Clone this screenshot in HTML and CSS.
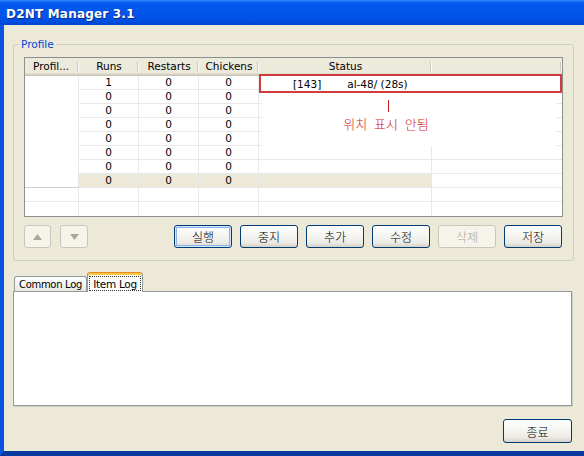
FILE: index.html
```html
<!DOCTYPE html>
<html>
<head>
<meta charset="utf-8">
<title>D2NT Manager 3.1</title>
<link rel="stylesheet" href="styles.css">
</head>
<body>
<div class="window">
  <div class="titlebar"><span class="title">D2NT Manager 3.1</span></div>
  <div class="client">
    <fieldset class="group">
      <legend class="group-label">Profile</legend>
      <div class="lv">
        <div class="hc hc-left">Profil...</div>
        <div class="hc">Runs</div>
        <div class="hc">Restarts</div>
        <div class="hc">Chickens</div>
        <div class="hc">Status</div>
        <div class="hc"></div>

        <div class="c c1"></div><div class="c">1</div><div class="c">0</div><div class="c">0</div><div class="c"></div><div class="c last"></div>
        <div class="c c1"></div><div class="c">0</div><div class="c">0</div><div class="c">0</div><div class="c"></div><div class="c last"></div>
        <div class="c c1"></div><div class="c">0</div><div class="c">0</div><div class="c">0</div><div class="c"></div><div class="c last"></div>
        <div class="c c1"></div><div class="c">0</div><div class="c">0</div><div class="c">0</div><div class="c"></div><div class="c last"></div>
        <div class="c c1"></div><div class="c">0</div><div class="c">0</div><div class="c">0</div><div class="c"></div><div class="c last"></div>
        <div class="c c1"></div><div class="c">0</div><div class="c">0</div><div class="c">0</div><div class="c"></div><div class="c last"></div>
        <div class="c c1"></div><div class="c">0</div><div class="c">0</div><div class="c">0</div><div class="c"></div><div class="c last"></div>
        <div class="c c1 c1-end"></div><div class="c hl">0</div><div class="c hl">0</div><div class="c hl">0</div><div class="c hl"></div><div class="c last"></div>
        <div class="c"></div><div class="c"></div><div class="c"></div><div class="c"></div><div class="c"></div><div class="c last"></div>
        <div class="c c-bottom"></div><div class="c c-bottom"></div><div class="c c-bottom"></div><div class="c c-bottom"></div><div class="c c-bottom"></div><div class="c c-bottom last"></div>

        <div class="redbox"><span class="rb-id">[143]</span><span class="rb-txt">al-48/ (28s)</span></div>
        <div class="note">
          <div class="note-inner">
            <div class="note-line"></div>
            <div class="note-text">위치 표시 안됨</div>
          </div>
        </div>
      </div>
      <div class="btnrow">
        <div class="arrows">
          <button class="btn arrow disabled" type="button"><svg width="9" height="6" viewBox="0 0 9 6"><polygon points="4.5,0 9,6 0,6" fill="#ACA899"/></svg></button>
          <button class="btn arrow arrow-down disabled" type="button"><svg width="9" height="6" viewBox="0 0 9 6"><polygon points="0,0 9,0 4.5,6" fill="#ACA899"/></svg></button>
        </div>
        <div class="actions">
          <button class="btn kr default" type="button">실행</button>
          <button class="btn kr" type="button">중지</button>
          <button class="btn kr" type="button">추가</button>
          <button class="btn kr" type="button">수정</button>
          <button class="btn kr disabled" type="button">삭제</button>
          <button class="btn kr" type="button">저장</button>
        </div>
      </div>
    </fieldset>

    <div class="tabs">
      <div class="tabstrip">
        <div class="tab tab-off">Common Log</div>
        <div class="tab tab-on"><span class="focus">Item Log</span></div>
      </div>
      <div class="panel"></div>
    </div>

    <div class="footer">
      <button class="btn kr close" type="button">종료</button>
    </div>
  </div>
</div>
</body>
</html>
```

FILE: styles.css
```css
* { box-sizing: border-box; }
html, body { margin: 0; padding: 0; }
body {
  width: 584px;
  height: 456px;
  overflow: hidden;
  background: #ECE9D8;
  font-family: "DejaVu Sans", "Noto Sans CJK KR", sans-serif;
  font-size: 10px;
  color: #000;
}
.window {
  display: flex;
  flex-direction: column;
  height: 456px;
}
.titlebar {
  flex: none;
  height: 25px;
  padding: 3px 0 0 6px;
  display: flex;
  align-items: center;
  background: linear-gradient(#3A8CFF 0, #0A62F0 2px, #0058EE 5px, #0256EA 50%, #004FE0 85%, #0044CC 100%);
}
.title {
  color: #fff;
  font: bold 12px "DejaVu Sans", sans-serif;
  letter-spacing: 0.2px;
  text-shadow: 1px 1px 0 #0A2A8A;
}
.client {
  flex: 1;
  display: flex;
  flex-direction: column;
  background: #ECE9D8;
  border-left: 4px solid #0A55E0;
  border-bottom: 5px solid #0B3A9E;
}

/* group box */
.group {
  margin: 13px 10px 0 9px;
  padding: 6px 10px 12px 10px;
  border: 1px solid #D0D0BF;
  border-radius: 3px;
  min-width: 0;
}
.group-label {
  margin-left: -5px;
  padding: 0 2px;
  line-height: 13px;
  color: #0046D5;
  font-size: 10.5px;
}

/* list view */
.lv {
  position: relative;
  width: 539px;
  height: 160px;
  border: 1px solid #8E8F8F;
  background: #fff;
  display: grid;
  grid-template-columns: 54px 60px 60px 60px 173px 130px;
  grid-template-rows: 18px;
  grid-auto-rows: 14px;
}
.hc {
  position: relative;
  display: flex;
  align-items: center;
  justify-content: center;
  padding-bottom: 2px;
  background: #EBEADB;
  box-shadow: inset 0 -1px #CBC7B8, inset 0 -2px #D6D2C2, inset 0 -3px #E2DECD;
  white-space: nowrap;
  font-size: 10.5px;
}
.hc::after {
  content: "";
  position: absolute;
  right: 1px;
  top: 4px;
  bottom: 5px;
  width: 1px;
  background: #C7C5B2;
  box-shadow: 1px 0 #FFFFFF;
}
.hc:last-of-type::after { display: none; }
.hc-left { justify-content: flex-start; padding-left: 8px; }
.c {
  display: flex;
  align-items: center;
  justify-content: center;
  border-right: 1px solid #E8E8E8;
  border-bottom: 1px solid #E8E8E8;
  line-height: 13px;
  font-size: 10.5px;
}
.c1 { border-bottom-color: transparent; }
.c1-end { border-bottom-color: #D0D0D0; }
.c-bottom { border-bottom: none; }
.last { border-right: none; }
.hl { background: #ECE9D8; }

/* annotation overlays */
.redbox {
  position: absolute;
  left: 234px;
  top: 16px;
  width: 303px;
  height: 19px;
  border: 2px solid #D23C3F;
  background: #fff;
  display: flex;
  align-items: center;
  font-size: 10.5px;
}
.rb-id { margin-left: 32px; }
.rb-txt { margin-left: 26px; }
.note {
  position: absolute;
  left: 237px;
  top: 35px;
  width: 294px;
  height: 53px;
  background: #fff;
}
.note-inner {
  width: 84px;
  margin-left: 82px;
  display: flex;
  flex-direction: column;
  align-items: center;
}
.note-line {
  width: 1px;
  height: 12px;
  margin-top: 7px;
  margin-left: 4px;
  background: #C81818;
}
.note-text {
  margin-top: 4px;
  color: #D21B1B;
  font: 300 13px "Noto Sans CJK KR", sans-serif;
  line-height: 15px;
  word-spacing: 4px;
  white-space: nowrap;
}

/* buttons */
.btnrow {
  display: flex;
  justify-content: space-between;
  margin-top: 8px;
}
.arrows { display: flex; gap: 9px; }
.actions { display: flex; gap: 8px; margin-right: 1px; }
.btn {
  width: 58px;
  height: 23px;
  padding: 0;
  border: 1px solid #003C74;
  border-radius: 3px;
  background: linear-gradient(#FFFFFF 0, #F6F6F2 40%, #ECEBE6 80%, #D6D0C5 100%);
  color: #000;
  font-family: "DejaVu Sans", sans-serif;
  font-size: 10px;
  display: flex;
  align-items: center;
  justify-content: center;
}
.kr { font: 300 12px "Noto Sans CJK KR", sans-serif; }
.default {
  box-shadow: inset 0 0 0 1px #CEE7FF, inset 0 0 0 2px #8FB2EE;
}
.disabled {
  border-color: #C9C7BA;
  background: #F5F4EA;
  color: #ACA899;
}
.arrow { width: 27px; }
.arrow-down { width: 28px; }

/* tabs */
.tabs {
  margin: 11px 12px 0 9px;
  display: flex;
  flex-direction: column;
}
.tabstrip {
  position: relative;
  z-index: 1;
  height: 20px;
  margin-bottom: -1px;
  padding-left: 1px;
  display: flex;
  align-items: flex-end;
}
.tab {
  border: 1px solid #919B9C;
  border-bottom: none;
  border-radius: 3px 3px 0 0;
  display: flex;
  align-items: center;
  justify-content: center;
  white-space: nowrap;
  letter-spacing: -0.3px;
  font-size: 10px;
}
.tab-off {
  width: 73px;
  height: 15px;
  margin-bottom: 1px;
  padding-top: 1px;
  background: linear-gradient(#FFFFFF, #F3F3EF 60%, #E8E7E1);
}
.tab-on {
  width: 56px;
  height: 20px;
  background: #fff;
  border-top: 1px solid #E68B2C;
  box-shadow: inset 0 2px #FFC73C;
  padding: 3px 1px 1px;
  align-items: stretch;
}
.focus {
  flex: 1;
  display: flex;
  align-items: center;
  justify-content: center;
  border: 1px dotted #333;
  font-size: 10.5px;
}
.panel {
  height: 115px;
  border: 1px solid #919B9C;
  background: #fff;
  box-shadow: 1px 1px 0 #D0CEBF;
}

/* footer */
.footer {
  display: flex;
  justify-content: flex-end;
  margin: 13px 12px 0 0;
}
.close { width: 69px; height: 24px; }
```
